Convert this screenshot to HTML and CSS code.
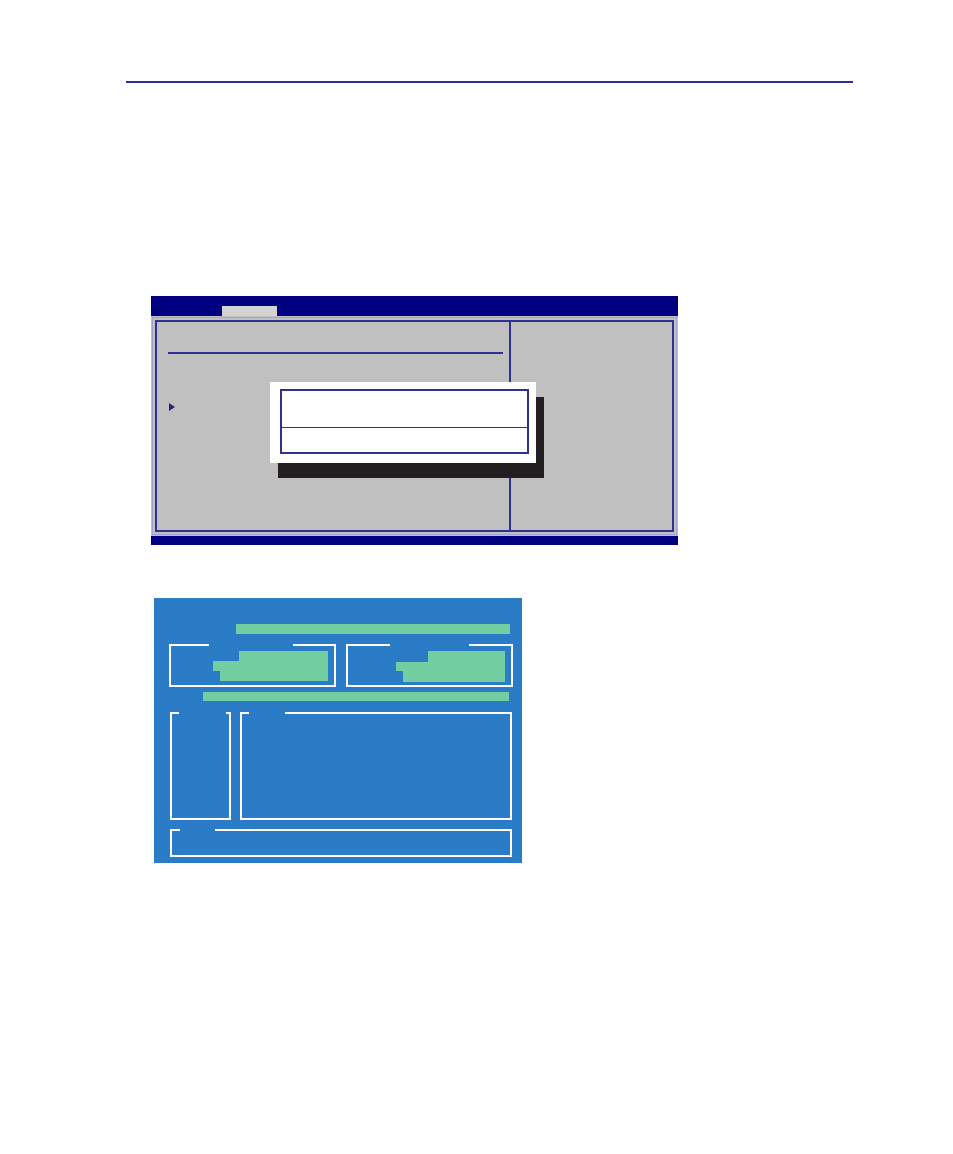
FILE: index.html
```html
<!DOCTYPE html>
<html lang="en">
<head>
  <meta charset="UTF-8">
  <meta name="viewport" content="width=device-width, initial-scale=1.0">
  <title>BIOS screens</title>
  <link rel="stylesheet" href="styles.css">
</head>
<body>
  <div class="page">
    <div class="rule"></div>

    <!-- BIOS setup screen with dialog -->
    <div class="bios">
      <div class="bios-top">
        <div class="tab"></div>
      </div>
      <div class="bios-body">
        <div class="inset">
          <div class="frame">
            <div class="main">
              <div class="main-line"></div>
              <div class="arrow"></div>
            </div>
            <div class="help"></div>
          </div>
        </div>
      </div>
      <div class="bios-bottom"></div>

      <div class="dialog">
        <div class="dialog-box">
          <div class="dialog-head"></div>
        </div>
      </div>
    </div>

    <!-- flash utility screen -->
    <div class="flash">
      <div class="bar bar-title"></div>

      <div class="flash-row">
        <div class="box box-a">
          <div class="box-top"><i class="seg"></i><i class="gap"></i><i class="seg rest"></i></div>
          <div class="fill f1"></div>
          <div class="fill f2"></div>
          <div class="fill f3"></div>
        </div>
        <div class="box box-b">
          <div class="box-top"><i class="seg"></i><i class="gap"></i><i class="seg rest"></i></div>
          <div class="fill f1"></div>
          <div class="fill f2"></div>
          <div class="fill f3"></div>
        </div>
      </div>

      <div class="bar bar-status"></div>

      <div class="flash-row lower">
        <div class="box box-c">
          <div class="box-top"><i class="seg"></i><i class="gap"></i><i class="seg rest"></i></div>
        </div>
        <div class="box box-d">
          <div class="box-top"><i class="seg"></i><i class="gap"></i><i class="seg rest"></i></div>
        </div>
      </div>

      <div class="box box-e">
        <div class="box-top"><i class="seg"></i><i class="gap"></i><i class="seg rest"></i></div>
      </div>
    </div>
  </div>
</body>
</html>
```

FILE: styles.css
```css
body {
  margin: 0;
  background-color: #fff;
  font-family: 'Liberation Sans', Arial, sans-serif;
}

.page {
  padding-top: 81px;
  padding-bottom: 40px;
}

.rule {
  width: 727px;
  height: 2px;
  margin-left: 126px;
  background-color: #2e3192;
}

/* ---- BIOS screen ---- */

.bios {
  position: relative;
  width: 527px;
  margin: 213px 0 0 151px;
  background-color: #000080;
}

.bios-top {
  height: 20px;
  padding-left: 71px;
  display: flex;
  align-items: flex-end;
}

.tab {
  width: 55px;
  height: 10px;
  background-color: #d3d3d3;
}

.bios-body {
  height: 220px;
  box-sizing: border-box;
  padding: 1px;
  background-color: #c0c0c0;
}

.inset {
  height: 100%;
  box-sizing: border-box;
  padding: 2px;
  border: 1px solid #a3a4cc;
}

.frame {
  height: 100%;
  box-sizing: border-box;
  border: 2px solid #2e3192;
  display: flex;
}

.main {
  width: 352px;
  border-right: 2px solid #2e3192;
}

.main-line {
  width: 335px;
  height: 2px;
  margin: 30px 0 0 11px;
  background-color: #2e3192;
}

.arrow {
  width: 0;
  height: 0;
  margin: 49px 0 0 12px;
  border-left: 6px solid #262680;
  border-top: 4px solid transparent;
  border-bottom: 4px solid transparent;
}

.help {
  flex: 1;
}

.bios-bottom {
  height: 9px;
}

.dialog {
  position: absolute;
  left: 119px;
  top: 86px;
  width: 266px;
  height: 81px;
  padding: 7px 7px 0 10px;
  box-sizing: border-box;
  background-color: #fff;
  box-shadow: 8px 15px 0 #231f20;
}

.dialog-box {
  height: 65px;
  box-sizing: border-box;
  border: 2px solid #2e3192;
}

.dialog-head {
  height: 36px;
  border-bottom: 1px solid #2e3192;
}

/* ---- flash utility screen ---- */

.flash {
  width: 368px;
  height: 265px;
  box-sizing: border-box;
  margin: 53px 0 0 154px;
  padding: 26px 0 0 15px;
  background-color: #2b7cc7;
}

.bar {
  background-color: #73cea2;
}

.bar-title {
  width: 274px;
  height: 10px;
  margin-left: 67px;
}

.bar-status {
  width: 306px;
  height: 9px;
  margin: 5px 0 0 34px;
}

.flash-row {
  display: flex;
  gap: 10px;
  margin-top: 10px;
  height: 43px;
}

.flash-row.lower {
  gap: 9px;
  margin: 11px 0 0 1px;
  height: 108px;
}

.box {
  box-sizing: border-box;
  border: 2px solid #fff;
  border-top: 0;
}

.box-top {
  display: flex;
  height: 2px;
}

.box-top i {
  display: block;
}

.box-top .seg {
  background-color: #fff;
}

.box-top .rest {
  flex: 1;
}

.fill {
  background-color: #73cea2;
}

.box-a {
  width: 167px;
  padding-top: 0;
}

.box-a .box-top .seg:first-child { width: 38px; }
.box-a .gap { width: 84px; }
.box-a .f1 { margin: 5px 0 0 68px; width: 89px; height: 10px; }
.box-a .f2 { margin-left: 42px; width: 115px; height: 10px; }
.box-a .f3 { margin-left: 49px; width: 108px; height: 10px; }

.box-b {
  width: 167px;
}

.box-b .box-top .seg:first-child { width: 42px; }
.box-b .gap { width: 79px; }
.box-b .f1 { margin: 5px 0 0 80px; width: 77px; height: 11px; }
.box-b .f2 { margin-left: 48px; width: 109px; height: 9px; }
.box-b .f3 { margin-left: 55px; width: 102px; height: 11px; }

.box-c {
  width: 61px;
}

.box-c .box-top .seg:first-child { width: 7px; }
.box-c .gap { width: 47px; }

.box-d {
  width: 272px;
}

.box-d .box-top .seg:first-child { width: 7px; }
.box-d .gap { width: 36px; }

.box-e {
  width: 342px;
  height: 28px;
  margin: 9px 0 0 1px;
}

.box-e .box-top .seg:first-child { width: 8px; }
.box-e .gap { width: 35px; }
```
